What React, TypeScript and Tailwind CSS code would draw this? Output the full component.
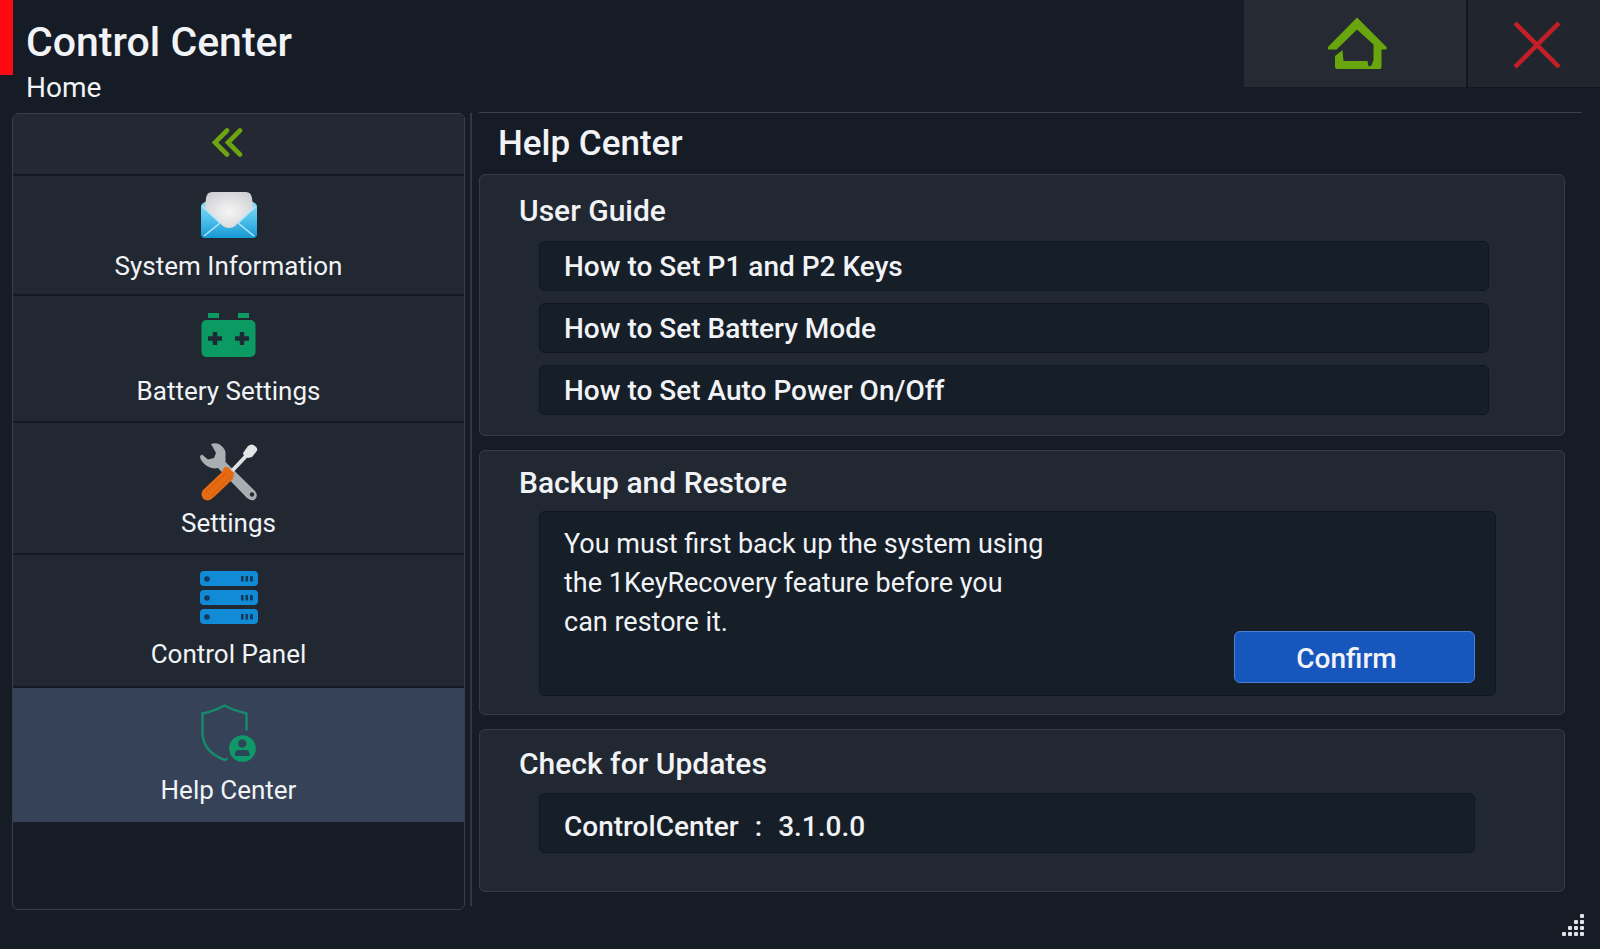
import React, { useState } from "react";
import clsx from "clsx";

const EnvelopeIcon = () => (
  <svg width="56" height="46" viewBox="0 0 56 46" aria-hidden="true">
    <defs>
      <linearGradient id="envelopeBody" x1="0" y1="0" x2="0" y2="1">
        <stop offset="0" stopColor="#8fdcf5" />
        <stop offset="0.5" stopColor="#4fc0ea" />
        <stop offset="1" stopColor="#1599d3" />
      </linearGradient>
      <radialGradient id="envelopePaper" cx="0.5" cy="0.55" r="0.65">
        <stop offset="0" stopColor="#f6f5f6" />
        <stop offset="1" stopColor="#cfcfd2" />
      </radialGradient>
    </defs>
    <path
      d="M0 15C0 12 2 11 6 9H50C54 11 56 12 56 15V42Q56 46 52 46H4Q0 46 0 42Z"
      fill="url(#envelopeBody)"
    />
    <path
      d="M5 6Q6 0 11 0H45Q50 0 51 6L52 17L37 31L34 34Q32 36 28 36Q24 36 22 34L19 31L4 17Z"
      fill="url(#envelopePaper)"
    />
    <path
      d="M1 14L19 31L3 44M55 14L37 31L53 44"
      fill="none"
      stroke="#b5e9fa"
      strokeWidth="1.500"
    />
  </svg>
);

const BatteryIcon = () => (
  <svg width="55" height="46" viewBox="0 0 55 46" aria-hidden="true">
    <g fill="#0b9a61">
      <rect x="7" y="1" width="11" height="5" />
      <rect x="37" y="1" width="11" height="5" />
      <rect x="0.500" y="8" width="54" height="37" rx="5" />
    </g>
    <path
      d="M14 20V33M7 26.500H21M41 20V33M34 26.500H48"
      stroke="#1c2b33"
      strokeWidth="4.500"
    />
  </svg>
);

const ToolsIcon = () => (
  <svg width="58" height="58" viewBox="0 0 58 58" aria-hidden="true">
    <path
      d="M11 1Q15 -0.500 19 1Q24 4 25.500 9L25.500 19L55 48Q59 54 54 57Q51 58 47 55L18 25Q12 26.500 7 23Q0 18 0 13L2 11.500L8 16.500L14 15L16 10Z"
      fill="#a9aeb2"
    />
    <circle cx="52" cy="51.500" r="2.200" fill="#222a33" />
    <path d="M31 29L47.500 11.500" stroke="#dfe1e3" strokeWidth="4" />
    <path
      d="M43 10L48 3Q52 0 55 3Q59 6 56 9L52 14L48 15L44 13Z"
      fill="#e4e5e7"
    />
    <path
      d="M24 24.500Q28 23 31 27L34 29.500L33 36L14 54Q8 60 3 55.500Q0 51 3 47L22 29Z"
      fill="#e66a12"
    />
    <path
      d="M26 30L6 49M30 34L11 53"
      stroke="#cf5a0c"
      strokeWidth="1"
      fill="none"
    />
  </svg>
);

const ServerIcon = () => (
  <svg width="58" height="53" viewBox="0 0 58 53" aria-hidden="true">
    {[0, 19, 38].map((y) => (
      <g key={y}>
        <rect x="0" y={y} width="58" height="15" rx="4" fill="#118bd6" />
        <g fill="#123a5c">
          <circle cx="7" cy={y + 8} r="2.800" />
          <rect x="41" y={y + 5} width="2.600" height="5.500" />
          <rect x="45.500" y={y + 5} width="2.600" height="5.500" />
          <rect x="50" y={y + 5} width="3" height="5.500" rx="1" />
        </g>
      </g>
    ))}
  </svg>
);

const ShieldUserIcon = () => (
  <svg width="56" height="58" viewBox="0 0 56 58" aria-hidden="true">
    <path
      d="M45.500 26.500V9.500Q33 6.500 23.500 1.500Q14 7 1.500 9.500V28Q1.500 48 24 56L26.500 54.500"
      fill="none"
      stroke="#158c6b"
      strokeWidth="2.400"
    />
    <circle cx="41.500" cy="44.500" r="13.300" fill="#0f9968" />
    <g fill="#2b4659">
      <circle cx="41.300" cy="39.500" r="4.200" />
      <path d="M34 52V50Q34 46 38 46H45Q48.500 46 48.500 50V52Z" />
    </g>
  </svg>
);

const CollapseIcon = () => (
  <svg width="32" height="31" viewBox="0 0 32 31" aria-hidden="true">
    <path
      d="M16 3.500L4 15.500L16 27.500M29 3.500L17 15.500L29 27.500"
      fill="none"
      stroke="#6ba50f"
      strokeWidth="4.600"
      strokeLinecap="round"
    />
  </svg>
);

const HomeIcon = () => (
  <svg width="59" height="53" viewBox="0 0 59 53" aria-hidden="true">
    <path
      d="M29 0.500L58.500 30V32.500H53.500V50Q53.500 52 51.500 52H9Q7 52 7 50V39L14.500 33L15.500 44H39.500L40.500 49.500L43.500 48.500L45.500 43V27.500L29 12.500L8.500 32.500H0V30Z"
      fill="#69a60d"
    />
  </svg>
);

const CloseIcon = () => (
  <svg width="48" height="48" viewBox="0 0 48 48" aria-hidden="true">
    <path d="M2 2L46 46M46 2L2 46" stroke="#c41f27" strokeWidth="4.500" />
  </svg>
);

const GripIcon = () => (
  <svg width="22" height="22" viewBox="0 0 22 22" aria-hidden="true">
    {[0, 1, 2, 3].map((row) =>
      [0, 1, 2, 3]
        .filter((col) => col >= 3 - row)
        .map((col) => (
          <rect
            key={`${row}-${col}`}
            x={col * 6}
            y={row * 6}
            width="4"
            height="4"
            rx="1"
            fill="#dfe3e8"
          />
        ))
    )}
  </svg>
);

const menu = [
  {
    label: "System Information",
    icon: EnvelopeIcon,
    size: "h-[120px] pt-4 pb-3",
  },
  { label: "Battery Settings", icon: BatteryIcon, size: "h-[127px] pt-4 pb-3.5" },
  { label: "Settings", icon: ToolsIcon, size: "h-[132px] pt-5 pb-3.5" },
  { label: "Control Panel", icon: ServerIcon, size: "h-[133px] pt-4 pb-4" },
  { label: "Help Center", icon: ShieldUserIcon, size: "h-[134px] pt-4 pb-4" },
];

const guides = [
  "How to Set P1 and P2 Keys",
  "How to Set Battery Mode",
  "How to Set Auto Power On/Off",
];

function Card({
  title,
  className,
  children,
}: {
  title: string;
  className?: string;
  children: React.ReactNode;
}) {
  return (
    <section
      className={clsx(
        "mr-[17px] rounded-md border border-[#363c45] bg-[#222832] pl-[59px]",
        className
      )}
    >
      <h3 className="-ml-5 text-[30px] leading-9 font-medium">{title}</h3>
      {children}
    </section>
  );
}

export default function App() {
  const [active, setActive] = useState<string>("Help Center");

  return (
    <div className="flex min-h-screen flex-col bg-[#151c26] font-[Roboto,sans-serif] text-[#f1f3f6]">
      <header className="flex items-start justify-between">
        <div className="flex">
          <span className="h-[75px] w-[13px] bg-[#fb0a12]" />
          <div className="pt-5 pb-[7px] pl-[13px]">
            <h1 className="text-[41px] leading-11 font-medium">
              Control Center
            </h1>
            <p className="mt-[7px] text-[28px] leading-[34px]">Home</p>
          </div>
        </div>
        <div className="flex">
          <button
            type="button"
            aria-label="Home"
            className="flex h-[87px] w-[222px] items-center justify-center bg-[#262b33] pl-1"
          >
            <HomeIcon />
          </button>
          <button
            type="button"
            aria-label="Close"
            className="flex h-[88px] w-[134px] items-center justify-center border-b border-l-2 border-[#11151c] bg-[#21262e] pt-0.5 pl-1.5"
          >
            <CloseIcon />
          </button>
        </div>
      </header>

      <div className="flex flex-1">
        <aside className="mt-px ml-3 flex w-[453px] shrink-0 flex-col overflow-hidden rounded-md border border-[#3a3f47] bg-[#161d26]">
          <button
            type="button"
            aria-label="Collapse menu"
            className="flex h-[62px] items-center justify-center border-b-2 border-[#121924] bg-[#242832] pr-6 pb-1"
          >
            <CollapseIcon />
          </button>
          <nav className="flex flex-col">
            {menu.map(({ label, icon: Icon, size }) => (
              <button
                key={label}
                type="button"
                onClick={() => setActive(label)}
                className={clsx(
                  "flex flex-col items-center justify-between pr-5",
                  size,
                  active === label
                    ? "bg-[#364258]"
                    : "border-b-2 border-[#121924] bg-[#212832]"
                )}
              >
                <Icon />
                <span className="text-[26px] leading-8">{label}</span>
              </button>
            ))}
          </nav>
        </aside>

        <div className="mt-px mr-[7px] mb-1 ml-[5px] w-0.5 bg-[#303741]" />

        <main className="mr-[18px] flex-1 border-t border-[#3a4048]">
          <h2 className="py-2 pl-[19px] text-[35px] leading-[45px] font-medium">
            Help Center
          </h2>
          <div className="flex flex-col gap-3.5">
            <Card title="User Guide" className="pt-[18px] pr-[75px] pb-5">
              <ul className="mt-3 flex flex-col gap-3">
                {guides.map((guide) => (
                  <li key={guide}>
                    <button
                      type="button"
                      className="h-[50px] w-full rounded-md border border-[#10161f] bg-[#161e28] px-6 pt-0.5 text-left text-[28px] leading-8 font-medium"
                    >
                      {guide}
                    </button>
                  </li>
                ))}
              </ul>
            </Card>

            <Card
              title="Backup and Restore"
              className="pt-3.5 pr-[68px] pb-[18px]"
            >
              <div className="mt-2.5 flex items-end justify-between rounded-md border border-[#10161f] bg-[#161e28] py-3 pr-5 pl-6">
                <p className="w-[484px] self-start pt-px text-[27px] leading-[39px]">
                  You must first back up the system using the 1KeyRecovery
                  feature before you can restore it.
                </p>
                <button
                  type="button"
                  className="mt-[107px] h-[52px] w-[241px] rounded-md border border-[#4a80d6] bg-[#1656bd] pt-1 pr-4 text-[28px] leading-8 font-medium"
                >
                  Confirm
                </button>
              </div>
            </Card>

            <Card title="Check for Updates" className="pt-4 pr-[89px] pb-[38px]">
              <dl className="mt-[11px] flex rounded-md border border-[#10161f] bg-[#161e28] px-6 pt-[15px] pb-[7px] text-[28px] leading-9 font-medium">
                <dt>ControlCenter</dt>
                <dd className="flex gap-4 pl-4">
                  <span>:</span>
                  <span>3.1.0.0</span>
                </dd>
              </dl>
            </Card>
          </div>
        </main>
      </div>

      <footer className="flex h-[39px] justify-end pt-1 pr-4">
        <GripIcon />
      </footer>
    </div>
  );
}
